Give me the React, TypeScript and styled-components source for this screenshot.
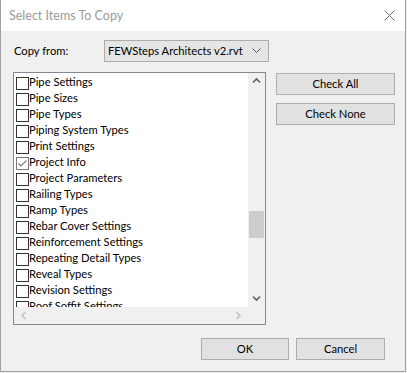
import styled, { createGlobalStyle } from 'styled-components';

const GlobalStyle = createGlobalStyle`
  html, body { margin: 0; padding: 0; background: #f0f0f0; }
  body { width: 407px; height: 373px; overflow: hidden; }
`;

const Dialog = styled.div`
  box-sizing: border-box;
  width: 406px;
  height: 372px;
  border: 1px solid #a0a0a0;
  border-top: none;
  background: #f0f0f0;
  display: flex;
  flex-direction: column;
  font-family: Lato, "Liberation Sans", sans-serif;
  font-size: 11.2px;
  color: #000;
`;

const TitleBar = styled.div`
  height: 31px;
  flex-shrink: 0;
  background: #fff;
  display: flex;
  align-items: center;
  justify-content: space-between;
  padding: 0 9px 0 8px;
  span { color: #9b9b9b; font-size: 12.5px; padding-bottom: 1px; }
`;

const CloseIcon = styled.svg`
  width: 11px;
  height: 11px;
  margin-right: 1px;
`;

const Body = styled.div`
  flex: 1;
  display: flex;
  flex-direction: column;
  padding: 9px 10px 0 12px;
`;

const SourceRow = styled.div`
  display: flex;
  align-items: center;
  height: 22px;
  label { width: 90px; padding-left: 1px; padding-bottom: 1px; }
`;

const Select = styled.div`
  box-sizing: border-box;
  width: 165px;
  height: 22px;
  background: #e5e5e5;
  border: 1px solid #adadad;
  display: flex;
  align-items: center;
  justify-content: space-between;
  padding: 0 7px 1px 3px;
  white-space: nowrap;
`;

const Main = styled.div`
  display: flex;
  gap: 10px;
  margin-top: 10px;
`;

const ListBox = styled.div`
  box-sizing: border-box;
  width: 256px;
  height: 253px;
  border: 1px solid #828790;
  background: #fff;
  display: grid;
  grid-template-columns: 1fr 17px;
  grid-template-rows: 1fr 17px;
`;

const Items = styled.div`
  overflow: hidden;
  padding: 1px 0 0 2px;
`;

const Item = styled.div`
  height: 16px;
  display: flex;
  align-items: flex-start;
  white-space: nowrap;
  span { line-height: 16px; }
`;

const Box = styled.div<{ $checked?: boolean }>`
  box-sizing: border-box;
  width: 13px;
  height: 13px;
  margin-top: 3px;
  flex-shrink: 0;
  border: 1px solid ${({ $checked }) => ($checked ? '#7a7a7a' : '#333')};
  background: #fff;
  display: flex;
  align-items: center;
  justify-content: center;
`;

const VScroll = styled.div`
  background: #f0f0f0;
  display: flex;
  flex-direction: column;
`;

const ArrowCell = styled.div`
  height: 17px;
  display: flex;
  align-items: center;
  justify-content: center;
  flex-shrink: 0;
`;

const Track = styled.div`
  flex: 1;
  padding-top: 121px;
`;

const Thumb = styled.div`
  width: 15px;
  height: 27px;
  margin-left: 1px;
  background: #cdcdcd;
`;

const HScroll = styled.div`
  background: #f0f0f0;
  display: flex;
  align-items: center;
  justify-content: space-between;
  padding: 0 5px 0 6px;
`;

const Corner = styled.div`
  background: #f0f0f0;
`;

const Side = styled.div`
  display: flex;
  flex-direction: column;
  gap: 8px;
  padding-top: 1px;
`;

const Button = styled.button<{ $w?: number }>`
  box-sizing: border-box;
  width: ${({ $w }) => $w ?? 119}px;
  height: 22px;
  background: #e1e1e1;
  border: 1px solid #adadad;
  font: inherit;
  color: #000;
  padding: 0;
  padding-bottom: 1px;
`;

const Footer = styled.div`
  display: flex;
  justify-content: flex-end;
  gap: 7px;
  padding: 13px 10px 0 0;
`;

const Chevron = ({ dir, color = '#606060' }: { dir: 'up' | 'down' | 'left' | 'right'; color?: string }) => {
  const d = {
    up: 'M1 5.5 L4.5 2 L8 5.5',
    down: 'M1 2.5 L4.5 6 L8 2.5',
    left: 'M5.5 1 L2 4.5 L5.5 8',
    right: 'M2.5 1 L6 4.5 L2.5 8',
  }[dir];
  return (
    <svg width="9" height="9" viewBox="0 0 9 9">
      <path d={d} fill="none" stroke={color} strokeWidth="1.6" />
    </svg>
  );
};

const items = [
  'Pipe Settings',
  'Pipe Sizes',
  'Pipe Types',
  'Piping System Types',
  'Print Settings',
  'Project Info',
  'Project Parameters',
  'Railing Types',
  'Ramp Types',
  'Rebar Cover Settings',
  'Reinforcement Settings',
  'Repeating Detail Types',
  'Reveal Types',
  'Revision Settings',
  'Roof Soffit Settings',
  'Room Tags',
];

export default function App() {
  return (
    <>
      <GlobalStyle />
      <Dialog>
        <TitleBar>
          <span>Select Items To Copy</span>
          <CloseIcon viewBox="0 0 11 11">
            <path d="M0.5 0.5 L10.5 10.5 M10.5 0.5 L0.5 10.5" stroke="#6d6d6d" strokeWidth="1" />
          </CloseIcon>
        </TitleBar>
        <Body>
          <SourceRow>
            <label>Copy from:</label>
            <Select>
              <span>FEWSteps Architects v2.rvt</span>
              <svg width="9" height="5" viewBox="0 0 9 5">
                <path d="M0.5 0.5 L4.5 4.5 L8.5 0.5" fill="none" stroke="#555" strokeWidth="1" />
              </svg>
            </Select>
          </SourceRow>
          <Main>
            <ListBox>
              <Items>
                {items.map((name) => (
                  <Item key={name}>
                    <Box $checked={name === 'Project Info'}>
                      {name === 'Project Info' && (
                        <svg width="11" height="11" viewBox="0 0 11 11">
                          <path d="M1.5 5.5 L4 8 L9.5 2.5" fill="none" stroke="#777" strokeWidth="1.1" />
                        </svg>
                      )}
                    </Box>
                    <span>{name}</span>
                  </Item>
                ))}
              </Items>
              <VScroll>
                <ArrowCell><Chevron dir="up" /></ArrowCell>
                <Track><Thumb /></Track>
                <ArrowCell><Chevron dir="down" /></ArrowCell>
              </VScroll>
              <HScroll>
                <Chevron dir="left" color="#c0c0c0" />
                <Chevron dir="right" color="#c0c0c0" />
              </HScroll>
              <Corner />
            </ListBox>
            <Side>
              <Button>Check All</Button>
              <Button>Check None</Button>
            </Side>
          </Main>
          <Footer>
            <Button $w={88}>OK</Button>
            <Button $w={89}>Cancel</Button>
          </Footer>
        </Body>
      </Dialog>
    </>
  );
}
